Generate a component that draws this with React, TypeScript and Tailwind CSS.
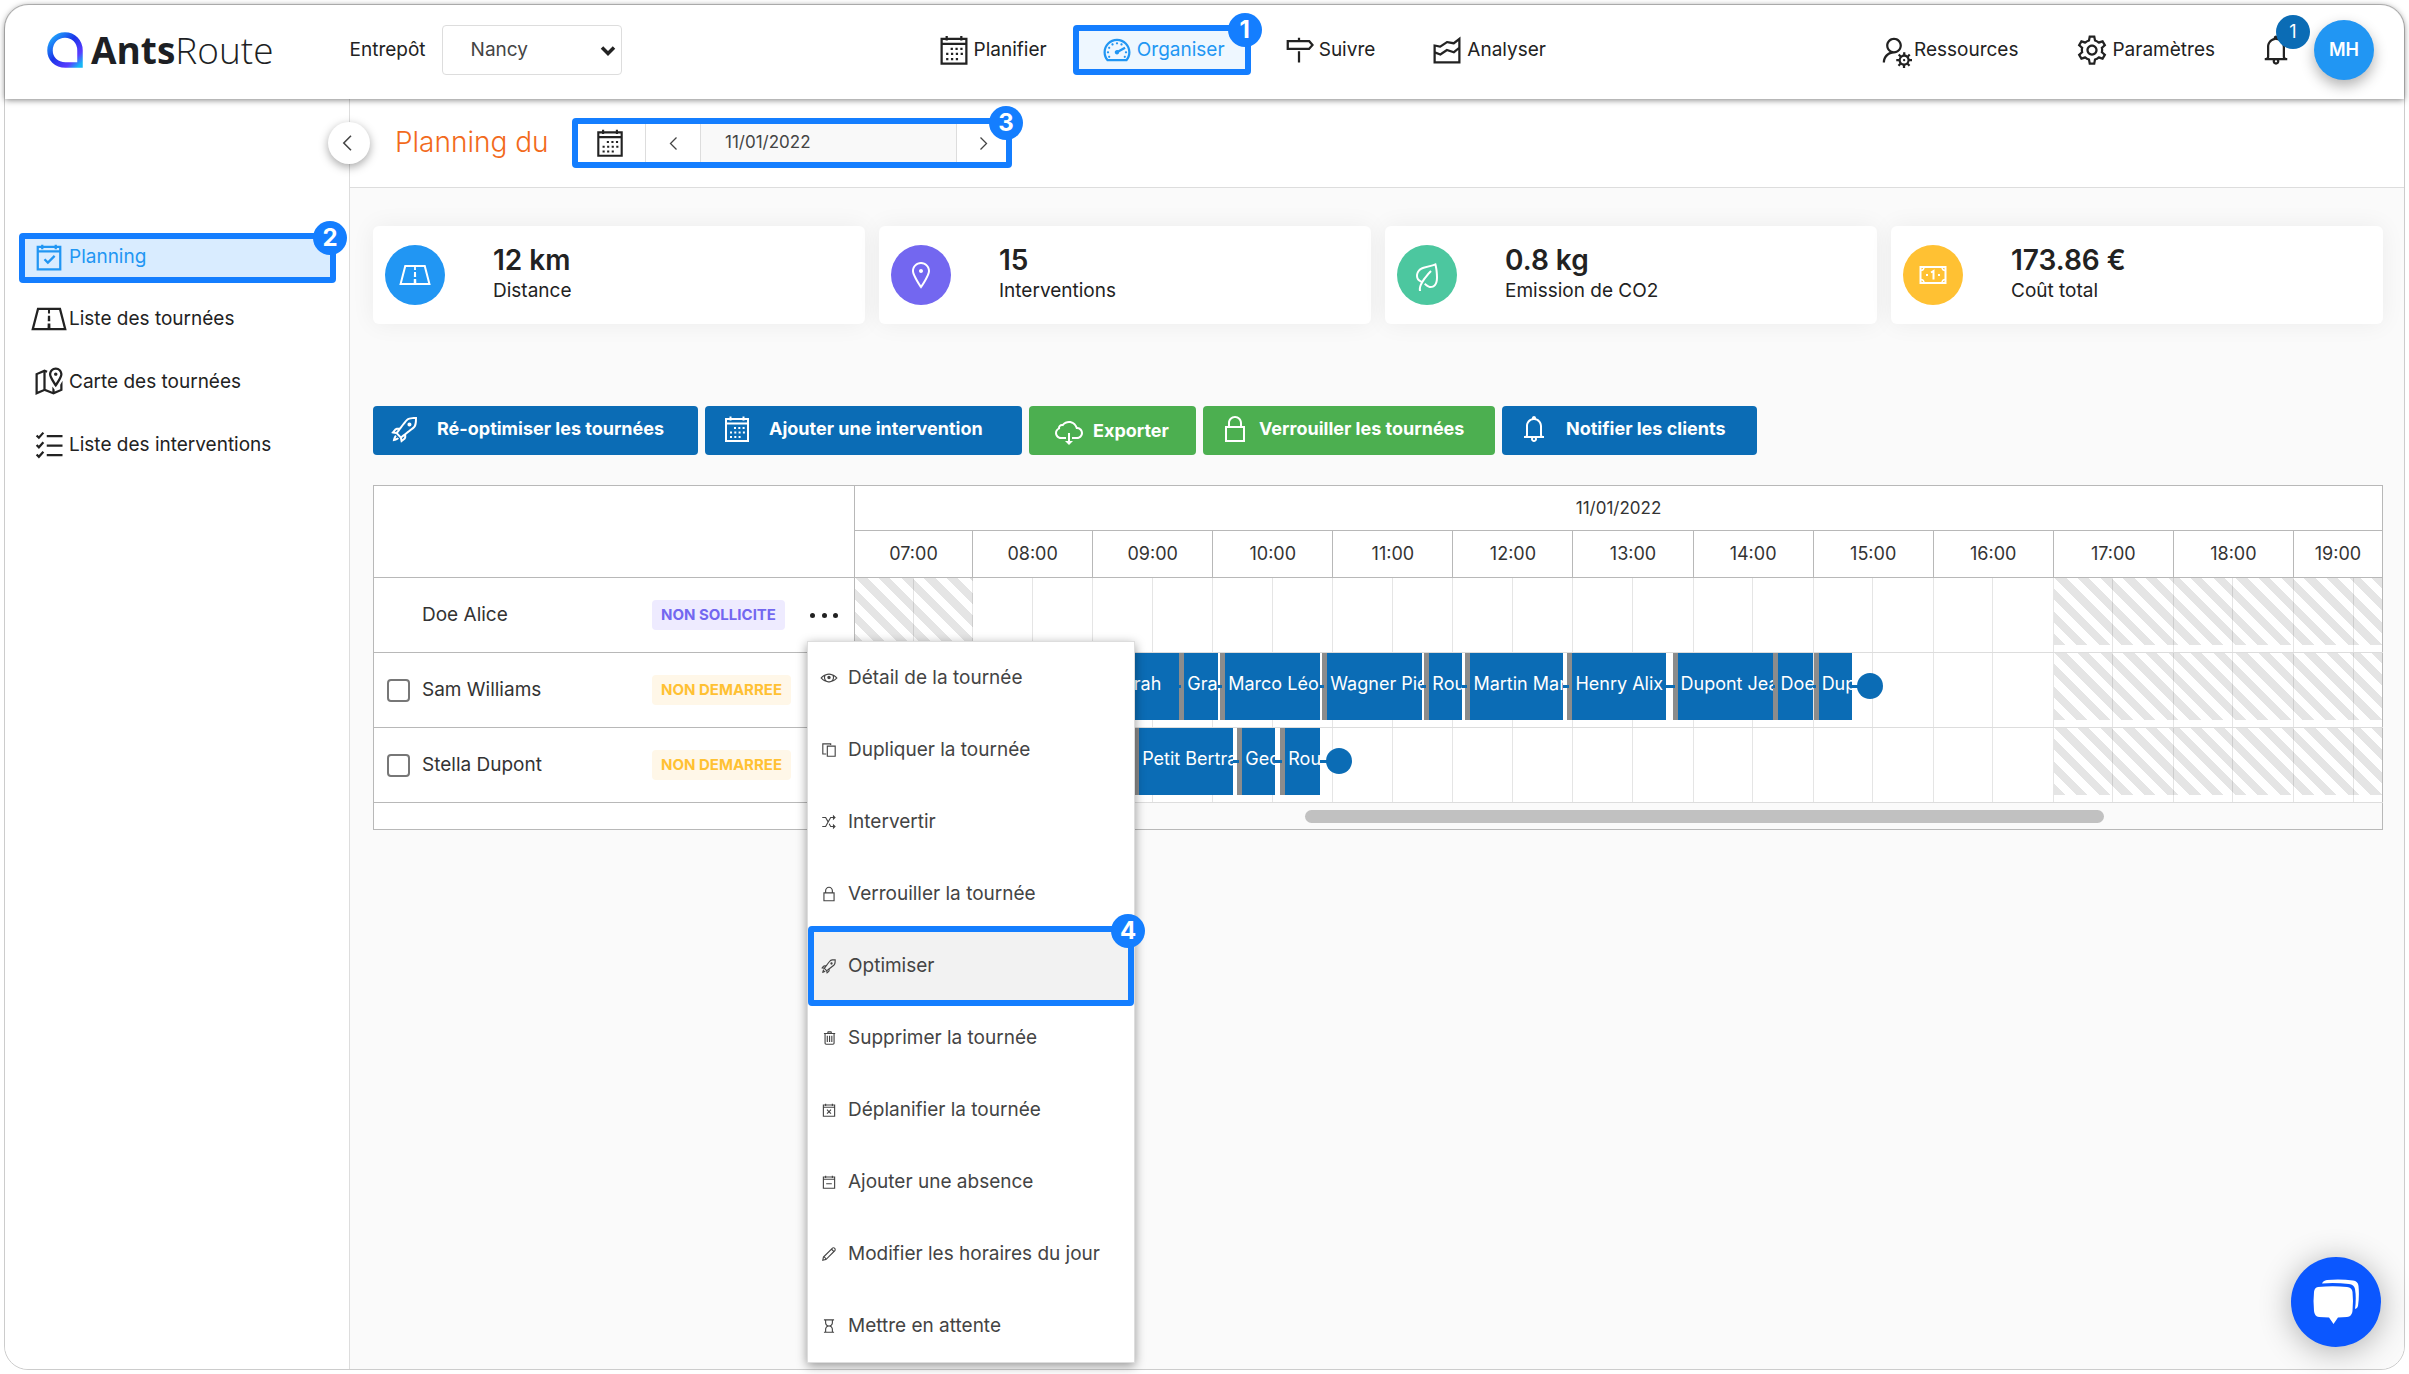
import type { ComponentType, ReactNode } from "react";
import {
  LiaBell,
  LiaCalendarCheck,
  LiaCalendarMinus,
  LiaCalendarTimes,
  LiaChartAreaSolid,
  LiaCloudDownloadAltSolid,
  LiaCogSolid,
  LiaCopy,
  LiaEye,
  LiaHourglass,
  LiaLeafSolid,
  LiaLockSolid,
  LiaMapMarkedAltSolid,
  LiaMapMarkerSolid,
  LiaMapSignsSolid,
  LiaPenSolid,
  LiaRandomSolid,
  LiaRoadSolid,
  LiaRocketSolid,
  LiaTachometerAltSolid,
  LiaTrashAlt,
  LiaUserCogSolid,
} from "react-icons/lia";

type Icon = ComponentType<{ className?: string }>;

const hours = ["07:00", "08:00", "09:00", "10:00", "11:00", "12:00", "13:00", "14:00", "15:00", "16:00", "17:00", "18:00", "19:00"];

const hourGrid = "grid grid-cols-[118fr_repeat(11,120fr)_88fr]";

// an hour is 120 units wide, the visible range is 1526 units
const RANGE = 1526;
const pct = (n: number) => `${(n / RANGE) * 100}%`;

type Bar = { label: string; start: number; end: number };
type Tour = { name: string; status: string; idle?: boolean; bars: Bar[]; end?: number };

const closed = [
  { from: 0, to: 118 },
  { from: 1198, to: 1526 },
];

const tours: Tour[] = [
  { name: "Doe Alice", status: "NON SOLLICITE", idle: true, bars: [] },
  {
    name: "Sam Williams",
    status: "NON DEMARREE",
    bars: [
      { label: "Sarah", start: 249, end: 324 },
      { label: "Grand Paul", start: 324, end: 363 },
      { label: "Marco Léo", start: 365, end: 465 },
      { label: "Wagner Pierre", start: 467, end: 567 },
      { label: "Roux Anne", start: 569, end: 607 },
      { label: "Martin Marie", start: 610, end: 708 },
      { label: "Henry Alix", start: 712, end: 810 },
      { label: "Dupont Jean", start: 817, end: 917 },
      { label: "Doe Jane", start: 917, end: 957 },
      { label: "Dupuis", start: 958, end: 996 },
    ],
    end: 1001,
  },
  {
    name: "Stella Dupont",
    status: "NON DEMARREE",
    bars: [
      { label: "Petit Bertrand", start: 279, end: 378 },
      { label: "Georges", start: 382, end: 420 },
      { label: "Roux Anne", start: 425, end: 465 },
    ],
    end: 471,
  },
];

const menu: { label: string; icon: Icon; active?: boolean }[] = [
  { label: "Détail de la tournée", icon: LiaEye },
  { label: "Dupliquer la tournée", icon: LiaCopy },
  { label: "Intervertir", icon: LiaRandomSolid },
  { label: "Verrouiller la tournée", icon: LiaLockSolid },
  { label: "Optimiser", icon: LiaRocketSolid, active: true },
  { label: "Supprimer la tournée", icon: LiaTrashAlt },
  { label: "Déplanifier la tournée", icon: LiaCalendarTimes },
  { label: "Ajouter une absence", icon: LiaCalendarMinus },
  { label: "Modifier les horaires du jour", icon: LiaPenSolid },
  { label: "Mettre en attente", icon: LiaHourglass },
];

function CalendarIcon({ className }: { className?: string }) {
  return (
    <svg className={className} viewBox="0 0 32 32" fill="none" stroke="currentColor" strokeWidth="2">
      <path d="M5 6H27V28H5ZM5 10.500H27M9.500 3.500V7.500M22.500 3.500V7.500" />
      <path d="M13 15H24M9 19.500H24M9 24H20" strokeDasharray="2 2.300" />
    </svg>
  );
}

function ChecklistIcon({ className }: { className?: string }) {
  return (
    <svg className={className} viewBox="0 0 32 32" fill="none" stroke="currentColor" strokeWidth="2">
      <path d="M5 7.500L7 9.500L11 5M5 16L7 18L11 13.500M5 24.500L7 26.500L11 22M14 8H28M14 16.500H28M14 25H28" />
    </svg>
  );
}

function BanknoteIcon({ className }: { className?: string }) {
  return (
    <svg className={className} viewBox="0 0 32 32" fill="none" stroke="currentColor" strokeWidth="2">
      <path d="M3.500 8H28.500V24H3.500Z" />
      <path d="M3.500 11.500Q7 11.500 7 8M28.500 11.500Q25 11.500 25 8M3.500 20.500Q7 20.500 7 24M28.500 20.500Q25 20.500 25 24" strokeWidth="1.500" />
      <path d="M14 13.500L16.500 12V20.500M9 16H11M21 16H23" />
    </svg>
  );
}

const stats = [
  { value: "12 km", label: "Distance", icon: LiaRoadSolid, color: "bg-[#2196f3]" },
  { value: "15", label: "Interventions", icon: LiaMapMarkerSolid, color: "bg-[#7367f0]" },
  { value: "0.8 kg", label: "Emission de CO2", icon: LiaLeafSolid, color: "bg-[#4cc79f]" },
  { value: "173.86 €", label: "Coût total", icon: BanknoteIcon, color: "bg-[#ffc133]" },
];

function Step({ n }: { n: number }) {
  return (
    <span className="absolute -top-[18px] -right-[17px] z-10 flex h-[34px] w-[34px] items-center justify-center rounded-full bg-[#147eff] text-2xl font-bold text-white">
      {n}
    </span>
  );
}

function Logo() {
  return (
    <a href="#" className="flex items-center gap-2">
      <svg width="36" height="36" viewBox="0 0 36 36" fill="none">
        <defs>
          <linearGradient id="mark" x1="0" y1="0" x2="1" y2="1">
            <stop offset="0" stopColor="#1fb4ff" />
            <stop offset="0.45" stopColor="#1a35e8" />
            <stop offset="0.8" stopColor="#5a3cff" />
            <stop offset="1" stopColor="#17b6f5" />
          </linearGradient>
        </defs>
        <path d="M33 33H18.500C9 33 3 26.500 3 18.500C3 9.500 9.500 3 18 3C26.500 3 33 9.500 33 18.500Z" stroke="url(#mark)" strokeWidth="5.500" />
      </svg>
      <span className="font-['Open_Sans',sans-serif] text-[37px] text-[#1d1f24]">
        <b className="font-bold">Ants</b>
        <span className="font-light">Route</span>
      </span>
    </a>
  );
}

function NavLink({ icon: Icon, children }: { icon: Icon; children: ReactNode }) {
  return (
    <a href="#" className="flex items-center gap-0.5">
      <Icon className="size-9 shrink-0" />
      {children}
    </a>
  );
}

function Header() {
  return (
    <header className="relative z-20 flex h-[94px] items-center rounded-t-3xl bg-white pr-[30px] pb-1 pl-[42px] shadow-[0_1px_6px_rgba(0,0,0,0.5)]">
      <Logo />
      <label htmlFor="depot" className="ml-[76px]">Entrepôt</label>
      <div className="relative ml-4">
        <select id="depot" className="h-[50px] w-[180px] appearance-none rounded-sm border border-[#ddd] bg-white pl-7 text-[#444]">
          <option>Nancy</option>
        </select>
        <svg className="pointer-events-none absolute top-5 right-1.5" width="16" height="12" viewBox="0 0 16 12" fill="none">
          <path d="M2 2.500L8 8.500L14 2.500" stroke="#222" strokeWidth="3.500" />
        </svg>
      </div>
      <nav className="ml-[314px] flex items-center">
        <NavLink icon={CalendarIcon}>Planifier</NavLink>
        <div className="relative mr-[30px] ml-[26px] flex h-[50px] w-[178px] items-center justify-center rounded border-[6px] border-[#147eff] bg-[#eef7ff] text-[#2196f3]">
          <NavLink icon={LiaTachometerAltSolid}>Organiser</NavLink>
          <Step n={1} />
        </div>
        <NavLink icon={LiaMapSignsSolid}>Suivre</NavLink>
        <div className="w-[54px]" />
        <NavLink icon={LiaChartAreaSolid}>Analyser</NavLink>
      </nav>
      <div className="ml-auto flex items-center">
        <NavLink icon={LiaUserCogSolid}>Ressources</NavLink>
        <div className="w-14" />
        <NavLink icon={LiaCogSolid}>Paramètres</NavLink>
        <button aria-label="Notifications" className="relative ml-[43px]">
          <LiaBell className="size-9" />
          <span className="absolute -top-[17px] -right-4 flex h-[34px] w-[34px] items-center justify-center rounded-full bg-[#0b6cb5] text-lg text-white">
            1
          </span>
        </button>
        <button className="ml-5 h-[60px] w-[60px] rounded-full bg-[#2196f3] text-lg font-semibold text-white shadow-[0_6px_14px_rgba(0,0,0,0.3)]">
          MH
        </button>
      </div>
    </header>
  );
}

function Sidebar() {
  return (
    <aside className="w-[345px] shrink-0 rounded-bl-3xl border-r border-[#ddd] bg-white pt-[134px] pl-3.5">
      <div className="relative flex h-[50px] w-[317px] items-center rounded border-[6px] border-[#147eff] bg-[#d9ecff] pb-0.5 pl-1.5 text-[#2196f3]">
        <NavLink icon={LiaCalendarCheck}>Planning</NavLink>
        <Step n={2} />
      </div>
      <div className="flex flex-col gap-[27px] pt-[18px] pl-3">
        <NavLink icon={LiaRoadSolid}>Liste des tournées</NavLink>
        <NavLink icon={LiaMapMarkedAltSolid}>Carte des tournées</NavLink>
        <NavLink icon={ChecklistIcon}>Liste des interventions</NavLink>
      </div>
    </aside>
  );
}

function Chevron({ right, className = "h-[15px]" }: { right?: boolean; className?: string }) {
  return (
    <svg className={className} viewBox="0 0 9 15" fill="none" stroke="#444" strokeWidth="1.300">
      <path d={right ? "M1.500 1.500L7.500 7.500L1.500 13.500" : "M7.500 1.500L1.500 7.500L7.500 13.500"} />
    </svg>
  );
}

function DateBar() {
  return (
    <div className="relative flex h-[89px] items-center border-b border-[#ddd] bg-white pl-[45px]">
      <button
        aria-label="Réduire le menu"
        className="absolute top-[23px] -left-[22px] flex h-[42px] w-[42px] items-center justify-center rounded-full bg-white pr-1 shadow-[0_3px_10px_rgba(0,0,0,0.35)]"
      >
        <Chevron className="h-[18px]" />
      </button>
      <h1 className="w-[177px] pb-0.5 text-[28px] font-light text-[#f26a1b]">Planning du</h1>
      <div className="relative flex h-[50px] w-[440px] rounded border-[6px] border-[#147eff]">
        <button aria-label="Calendrier" className="flex w-[68px] items-center justify-center border-r border-[#ddd] pr-1">
          <CalendarIcon className="size-[34px]" />
        </button>
        <button aria-label="Jour précédent" className="flex w-[55px] items-center justify-center border-r border-[#ddd]">
          <Chevron />
        </button>
        <input aria-label="Date" defaultValue="11/01/2022" className="min-w-0 flex-1 bg-[#f9f9f9] pl-6 text-[17px] text-[#444]" />
        <button aria-label="Jour suivant" className="flex w-[50px] items-center justify-center border-l border-[#ddd] pl-1">
          <Chevron right />
        </button>
        <Step n={3} />
      </div>
    </div>
  );
}

function Stats() {
  return (
    <div className="grid grid-cols-4 gap-3.5">
      {stats.map(({ value, label, icon: Icon, color }) => (
        <div key={label} className="flex h-[98px] items-center gap-12 rounded-md bg-white pl-3 shadow-[0_0_24px_rgba(0,0,0,0.06)]">
          <span className={`flex h-[60px] w-[60px] items-center justify-center rounded-full text-white ${color}`}>
            <Icon className="size-8" />
          </span>
          <div>
            <p className="text-[28px] leading-8 font-semibold">{value}</p>
            <p className="leading-[30px]">{label}</p>
          </div>
        </div>
      ))}
    </div>
  );
}

function Actions() {
  const base = "flex h-[49px] items-center rounded-sm text-lg font-bold text-white";
  return (
    <div className="mt-[82px] flex flex-wrap gap-[7px]">
      <button className={`${base} w-[325px] gap-4 bg-[#0b6cb5] pb-[3px] pl-4`}>
        <LiaRocketSolid className="size-8" />
        Ré-optimiser les tournées
      </button>
      <button className={`${base} w-[317px] gap-4 bg-[#0b6cb5] pb-[3px] pl-4`}>
        <CalendarIcon className="size-8" />
        Ajouter une intervention
      </button>
      <button className={`${base} w-[167px] gap-2 bg-[#4caf50] pl-6`}>
        <LiaCloudDownloadAltSolid className="size-8" />
        Exporter
      </button>
      <button className={`${base} w-[292px] gap-2 bg-[#4caf50] pb-[3px] pl-4`}>
        <LiaLockSolid className="size-8" />
        Verrouiller les tournées
      </button>
      <button className={`${base} w-[255px] gap-4 bg-[#0b6cb5] pb-[3px] pl-4`}>
        <LiaBell className="size-8" />
        Notifier les clients
      </button>
    </div>
  );
}

function TourMenu() {
  return (
    <ul className="absolute top-[38px] -left-[3px] z-30 flex w-[328px] flex-col border border-[#ddd] bg-white text-[#444] shadow-[0_3px_10px_rgba(0,0,0,0.4)]">
      {menu.map(({ label, icon: Icon, active }) => (
        <li key={label} className="flex h-[72px]">
          <button
            className={
              active
                ? "relative -my-1 flex w-full items-center gap-2.5 rounded border-[6px] border-[#147eff] bg-[#f2f2f2] pl-1.5"
                : "flex w-full items-center gap-2.5 pl-3"
            }
          >
            <Icon className="size-[18px]" />
            {label}
            {active && <Step n={4} />}
          </button>
        </li>
      ))}
    </ul>
  );
}

function Timeline({ tour }: { tour: Tour }) {
  return (
    <div className="relative h-[74px] overflow-hidden">
      {closed.map(({ from, to }) => (
        <div
          key={from}
          className="absolute top-0 h-[67px] bg-[repeating-linear-gradient(45deg,#e5e5e5_0,#e5e5e5_8px,#fff_8px,#fff_16px)]"
          style={{ left: pct(from), width: pct(to - from) }}
        />
      ))}
      <div className={`${hourGrid} absolute inset-0`}>
        {hours.map((h) => (
          <div key={h} className="group flex border-r border-black/10 last:border-r-0">
            <div className="w-1/2 border-r border-black/10 group-last:w-[60px]" />
          </div>
        ))}
      </div>
      {tour.bars.map((b) => (
        <div
          key={b.start}
          className="absolute top-0 h-[67px] overflow-hidden border-l-[5px] border-[#8c8c8c] bg-[#0b6cb5] pt-[17px] pl-[3px] text-lg whitespace-nowrap text-white"
          style={{ left: pct(b.start), width: pct(b.end - b.start) }}
        >
          {b.label}
        </div>
      ))}
      {tour.bars.map((b, i) => {
        const next = tour.bars[i + 1]?.start ?? tour.end ?? b.end;
        return (
          <div
            key={b.start}
            className="absolute top-8 h-[3px] bg-[#0b6cb5]"
            style={{ left: pct(b.end), width: pct(next - b.end + 2) }}
          />
        );
      })}
      {tour.end && <div className="absolute top-5 h-[26px] w-[26px] rounded-full bg-[#0b6cb5]" style={{ left: pct(tour.end) }} />}
    </div>
  );
}

function Planner() {
  return (
    <table className="mt-[30px] w-full table-fixed border-collapse border border-[#b8b8b8] bg-white text-[#333]">
      <thead>
        <tr>
          <th aria-label="Tournée" className="w-[481px] border border-[#b8b8b8]" />
          <th className="border border-[#b8b8b8] p-0 text-lg font-normal">
            <div className="flex h-[45px] items-center justify-center border-b border-[#b8b8b8] text-[17px]">11/01/2022</div>
            <div className={`${hourGrid} h-[46px]`}>
              {hours.map((h) => (
                <div key={h} className="flex items-center justify-center border-r border-[#b8b8b8] last:border-r-0">
                  {h}
                </div>
              ))}
            </div>
          </th>
        </tr>
      </thead>
      <tbody>
        {tours.map((tour) => (
          <tr key={tour.name}>
            <td className="border border-[#b8b8b8] p-0">
              <div className="flex h-[74px] items-center">
                <label className="flex w-[278px] items-center gap-3 pl-[13px]">
                  {tour.idle ? (
                    <span className="w-[23px]" />
                  ) : (
                    <input type="checkbox" className="h-[23px] w-[23px] appearance-none rounded-sm border-2 border-[#777] bg-white" />
                  )}
                  {tour.name}
                </label>
                <span
                  className={
                    tour.idle
                      ? "rounded bg-[#eeebff] px-[9px] text-[15px] leading-[30px] font-bold text-[#7367f0]"
                      : "rounded bg-[#fff7e8] px-[9px] text-[15px] leading-[30px] font-bold text-[#ffc133]"
                  }
                >
                  {tour.status}
                </span>
                {tour.idle && (
                  <div className="relative mr-4 ml-auto">
                    <button aria-label="Actions" className="flex h-6 w-7 items-center justify-between">
                      <i className="h-[5px] w-[5px] rounded-full bg-[#222]" />
                      <i className="h-[5px] w-[5px] rounded-full bg-[#222]" />
                      <i className="h-[5px] w-[5px] rounded-full bg-[#222]" />
                    </button>
                    <TourMenu />
                  </div>
                )}
              </div>
            </td>
            <td className="border-b border-[#ddd] p-0">
              <Timeline tour={tour} />
            </td>
          </tr>
        ))}
      </tbody>
      <tfoot>
        <tr>
          <td className="h-[27px]" />
          <td className="bg-[#fafafa] p-0">
            <div className="ml-[29.5%] h-[13px] w-[52.3%] rounded-full bg-[#c1c1c1]" />
          </td>
        </tr>
      </tfoot>
    </table>
  );
}

export default function App() {
  return (
    <div className="flex min-h-screen flex-col bg-white p-1 font-['Inter',sans-serif] text-[19px] text-[#222]">
      <div className="relative flex flex-1 flex-col rounded-3xl border border-[#ccc]">
        <Header />
        <div className="flex flex-1">
          <Sidebar />
          <main className="min-w-0 flex-1 rounded-br-3xl bg-[#fafafa]">
            <DateBar />
            <div className="pt-[38px] pr-[21px] pl-[23px]">
              <Stats />
              <Actions />
              <Planner />
            </div>
          </main>
        </div>
        <button
          aria-label="Ouvrir le chat"
          className="absolute right-[23px] bottom-[22px] flex h-[90px] w-[90px] items-center justify-center rounded-full bg-[#0b57ff] shadow-[0_4px_32px_rgba(0,0,0,0.3)]"
        >
          <svg width="46" height="46" viewBox="0 0 46 46" fill="#fff">
            <path d="M5 8Q20 6.500 34 8Q39 8.500 39.500 13Q40.500 22 39.500 32Q39 37.500 34 38L25 38.500L20.500 45L16 38.500L6 38Q1.500 37.500 1 32Q0 22 1 13Q1.500 8.500 5 8Z" />
            <path d="M9 4.500Q10 1.500 14 1Q28 0 40 1.500Q45 2 45.500 7Q46.500 17 45 27Q44.500 29.500 42 30Q43.500 19 42 10Q41 5.500 36 5Q22 3.500 9 4.500Z" />
          </svg>
        </button>
      </div>
    </div>
  );
}
